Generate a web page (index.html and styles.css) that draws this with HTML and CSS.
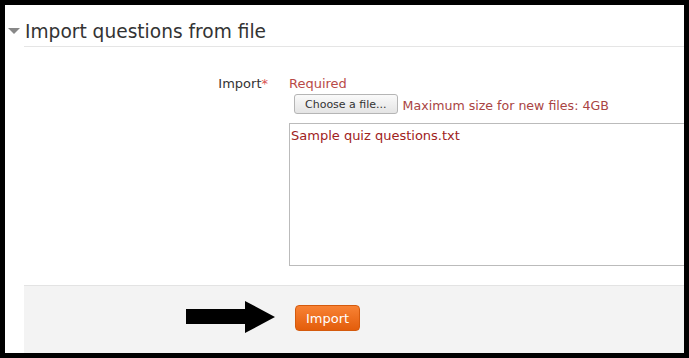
FILE: index.html
```html
<!DOCTYPE html>
<html lang="en">
<head>
    <meta charset="UTF-8">
    <title>Import questions from file</title>
    <link rel="stylesheet" href="styles.css">
</head>
<body>
<main class="frame">
    <section class="fieldset">
        <h2 class="legend"><span class="twisty"></span>Import questions from file</h2>
        <div class="fitem">
            <div class="flabel">Import<span class="req">*</span></div>
            <div class="felement">
                <div class="error">Required</div>
                <div class="picker">
                    <button class="btn" type="button">Choose a file...</button>
                    <span class="maxsize">Maximum size for new files: 4GB</span>
                </div>
                <div class="filelist">Sample quiz questions.txt</div>
            </div>
        </div>
    </section>
    <div class="buttons">
        <svg class="arrow" width="90" height="34" viewBox="0 0 90 34">
            <polygon points="0,8 59,8 59,0 89,16 59,32 59,23 0,23" fill="#000"/>
        </svg>
        <button class="submit" type="button">Import</button>
    </div>
</main>
</body>
</html>
```

FILE: styles.css
```css
html, body {
    margin: 0;
    height: 100%;
}

body {
    background: #000;
    font-family: 'DejaVu Sans', Verdana, sans-serif;
    color: #333;
    overflow: hidden;
}

.frame {
    margin: 5px;
    height: 348px;
    background: #fff;
    overflow: hidden;
}

.legend {
    display: flex;
    align-items: center;
    margin: 0 0 0 3px;
    padding-top: 11px;
    height: 30px;
    font-size: 18.6px;
    font-weight: normal;
    color: #333;
    white-space: nowrap;
}

.twisty {
    width: 0;
    height: 0;
    margin-right: 5px;
    border-left: 6px solid transparent;
    border-right: 6px solid transparent;
    border-top: 6px solid #888;
}

.fieldset {
    height: 280px;
}

.fitem {
    display: flex;
    margin-left: 19px;
    border-top: 1px solid #e5e5e5;
    padding-top: 27px;
}

.flabel {
    flex: none;
    width: 244px;
    text-align: right;
    font-size: 13px;
    line-height: 18px;
    padding-top: 1px;
}

.req {
    color: #d9534f;
}

.felement {
    flex: none;
    margin-left: 21px;
    font-size: 13px;
}

.error {
    color: #b94a48;
    line-height: 18px;
    padding-top: 1px;
}

.picker {
    display: flex;
    align-items: flex-end;
    margin-left: 5px;
    height: 21px;
}

.btn {
    height: 20px;
    padding: 0 10px;
    font-family: 'DejaVu Sans', sans-serif;
    font-size: 11px;
    color: #333;
    background: linear-gradient(#fafafa, #e4e4e4);
    border: 1px solid #b5b5b5;
    border-radius: 3px;
}

.maxsize {
    margin-left: 5px;
    color: #a94442;
    font-size: 12.6px;
    line-height: 16px;
}

.filelist {
    width: 420px;
    height: 143px;
    margin-top: 9px;
    padding: 4px 1px;
    box-sizing: border-box;
    border: 1px solid #bbb;
    color: #a0221c;
}

.buttons {
    display: flex;
    align-items: flex-start;
    margin-left: 19px;
    padding-top: 19px;
    height: 49px;
    background: #f3f3f3;
    border-top: 1px solid #e3e3e3;
}

.arrow {
    margin-left: 162px;
    margin-right: 19px;
    margin-top: -4px;
}

.submit {
    width: 65px;
    height: 26px;
    font-family: 'DejaVu Sans', sans-serif;
    font-size: 13px;
    color: #fff;
    background: linear-gradient(#f88234, #e35d0b);
    border: 1px solid #d45a0d;
    border-radius: 4px;
}
```
